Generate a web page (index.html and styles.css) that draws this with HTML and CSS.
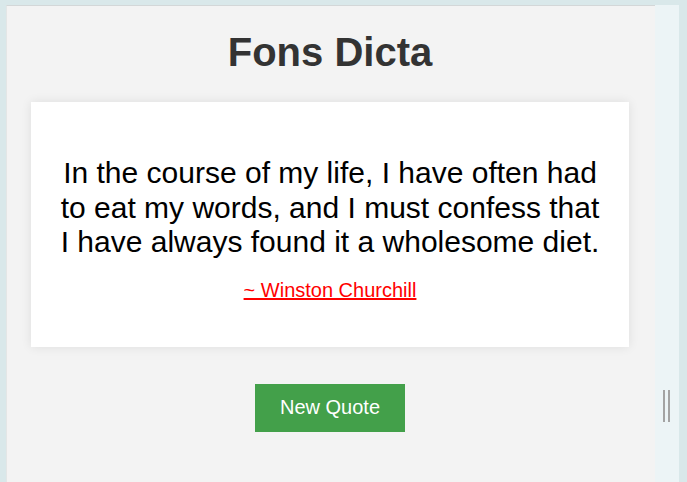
FILE: index.html
```html
<!DOCTYPE html>
<html lang="en">
<head>
<meta charset="utf-8">
<title>Fons Dicta</title>
<link rel="stylesheet" href="styles.css">
</head>
<body>
<div class="frame">
  <main class="panel">
    <h1 class="title">Fons Dicta</h1>
    <section class="card">
      <p class="quote">In the course of my life, I have often had to eat my words, and I must confess that I have always found it a wholesome diet.</p>
      <a class="author" href="#">~ Winston Churchill</a>
    </section>
    <div class="actions">
      <button class="btn" type="button">New Quote</button>
    </div>
  </main>
  <aside class="side">
    <span class="handle"></span>
  </aside>
</div>
</body>
</html>
```
FILE: styles.css
```css
html, body {
  margin: 0;
  height: 100%;
}
body {
  background: #d9e8ea;
  font-family: "Liberation Sans", Arial, sans-serif;
  overflow: hidden;
}
.frame {
  display: flex;
  height: calc(100% - 5px);
  margin: 5px 8px 0 6px;
}
.panel {
  flex: 1;
  background: #f3f3f3;
  border-top: 1px solid #d3d7d8;
  border-left: 1px solid #e3e6e6;
  padding: 0 26px 0 24px;
  display: flex;
  flex-direction: column;
}
.title {
  margin: 23px 0 27px;
  font-size: 40px;
  font-weight: bold;
  color: #333333;
  text-align: center;
  line-height: 46px;
}
.card {
  background: #ffffff;
  box-shadow: 0 0 10px rgba(0, 0, 0, 0.09);
  padding: 54px 26px 45px;
  text-align: center;
}
.quote {
  margin: 0 0 19px;
  font-size: 30px;
  line-height: 34.5px;
  color: #000000;
}
.author {
  font-size: 20px;
  line-height: 23px;
  color: #ff0000;
  text-decoration: underline;
}
.actions {
  display: flex;
  justify-content: center;
  margin-top: 37px;
}
.btn {
  width: 150px;
  height: 48px;
  border: none;
  background: #43a04a;
  color: #ffffff;
  font-family: "Liberation Sans", Arial, sans-serif;
  font-size: 20px;
  padding: 0;
  cursor: pointer;
}
.side {
  width: 24px;
  background: #ecf4f6;
  display: flex;
  justify-content: center;
  align-items: flex-start;
}
.handle {
  margin-top: 385px;
  margin-right: 1px;
  width: 3px;
  height: 32px;
  border-left: 2px solid #a3a3a3;
  border-right: 2px solid #a3a3a3;
}
```
